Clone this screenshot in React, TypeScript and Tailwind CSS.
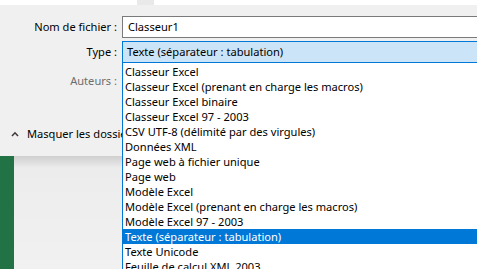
import React from "react";

const fileTypes = [
  "Classeur Excel",
  "Classeur Excel (prenant en charge les macros)",
  "Classeur Excel binaire",
  "Classeur Excel 97 - 2003",
  "CSV UTF-8 (délimité par des virgules)",
  "Données XML",
  "Page web à fichier unique",
  "Page web",
  "Modèle Excel",
  "Modèle Excel (prenant en charge les macros)",
  "Modèle Excel 97 - 2003",
  "Texte (séparateur : tabulation)",
  "Texte Unicode",
  "Feuille de calcul XML 2003",
  "Classeur Microsoft Excel 5.0/95",
];

const selected = "Texte (séparateur : tabulation)";

function Cursor() {
  return (
    <svg
      width="12"
      height="19"
      viewBox="0 0 12 19"
      className="absolute left-[312px] top-[241px]"
    >
      <path
        d="M0.5 0.5 L0.5 15.5 L4 12.2 L6.3 17.8 L8.6 16.8 L6.3 11.3 L11 11.3 Z"
        fill="#ffffff"
        stroke="#000000"
        strokeWidth="1"
        strokeLinejoin="miter"
      />
    </svg>
  );
}

export default function App() {
  return (
    <div className="relative w-[477px] h-[269px] overflow-hidden bg-[#f0f0f0] font-['Noto_Sans',sans-serif] text-[11.1px] text-black">
      {/* bottom of the browse panes */}
      <div className="flex h-[5px]">
        <div className="w-[137px] bg-white" />
        <div className="w-[17px] bg-[#e9e9e9]" />
        <div className="flex-1 bg-white" />
      </div>

      {/* dialog fields */}
      <div className="h-[151px] bg-[#f0f0f0] pt-[11px]">
        <div className="flex items-center h-[22px]">
          <div className="w-[122px] shrink-0 pr-[5px] text-right whitespace-nowrap">
            Nom de fichier :
          </div>
          <div className="w-[400px] shrink-0 h-[22px] bg-white border border-[#7a7a7a] pl-[5px] leading-[20px]">
            Classeur1
          </div>
        </div>

        <div className="flex items-center h-[22px] mt-[3px]">
          <div className="w-[122px] shrink-0 pr-[5px] text-right">Type :</div>
          <div className="relative w-[400px] shrink-0 h-[22px] z-10">
            <div className="h-[22px] bg-[#cce4f7] border border-[#0078d7] pl-[4px] leading-[20px] whitespace-nowrap">
              {selected}
            </div>
            <ul className="absolute top-full left-0 w-[400px] h-[220px] bg-white border-l border-[#0078d7] pt-[1px]">
              {fileTypes.map((t) => (
                <li
                  key={t}
                  className={`h-[15px] leading-[15px] pl-[2px] whitespace-nowrap ${
                    t === selected ? "bg-[#0078d7] text-white" : ""
                  }`}
                >
                  {t}
                </li>
              ))}
            </ul>
          </div>
        </div>

        <div className="flex items-center h-[16px] mt-[10px]">
          <div className="w-[122px] shrink-0 pr-[5px] text-right text-[#6d6d6d]">
            Auteurs :
          </div>
        </div>

        <div className="flex items-center w-[122px] overflow-hidden h-[16px] mt-[37px] pl-[11px] gap-[8px]">
          <svg width="8" height="6" viewBox="0 0 8 6" className="shrink-0">
            <polyline
              points="1,5 4,1.8 7,5"
              fill="none"
              stroke="#3c3c3c"
              strokeWidth="1.6"
            />
          </svg>
          <span className="whitespace-nowrap">Masquer les dossiers</span>
        </div>
      </div>

      {/* excel backstage behind the dialog */}
      <div className="flex h-[113px]">
        <div className="w-[14px] bg-[#217346]" />
        <div className="flex-1 bg-[linear-gradient(#cfcfcf,#ececec_12px,#f1f1f1)]" />
      </div>

      <Cursor />
    </div>
  );
}
